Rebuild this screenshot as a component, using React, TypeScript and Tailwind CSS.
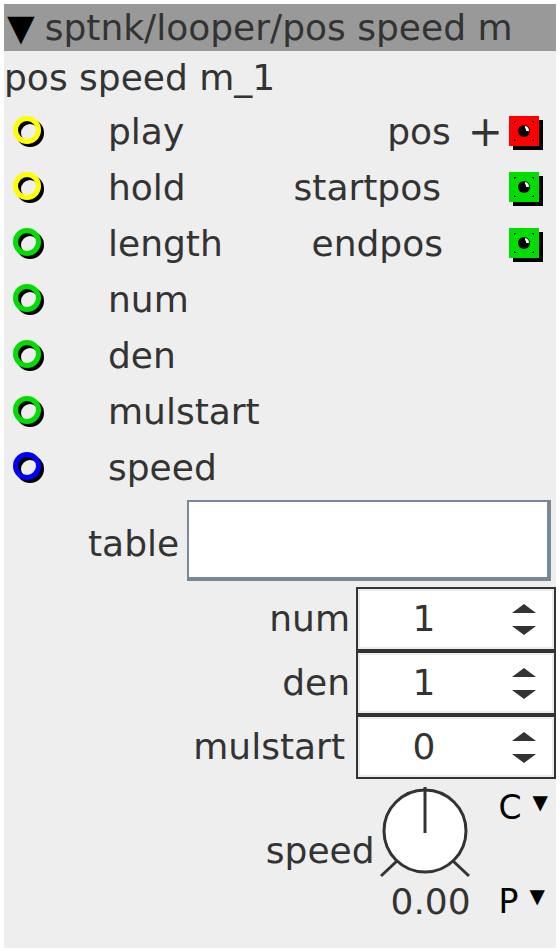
import React from "react";

type Kind = "bool" | "frac" | "pitch";

const INLETS: { name: string; kind: Kind }[] = [
  { name: "play", kind: "bool" },
  { name: "hold", kind: "bool" },
  { name: "length", kind: "frac" },
  { name: "num", kind: "frac" },
  { name: "den", kind: "frac" },
  { name: "mulstart", kind: "frac" },
  { name: "speed", kind: "pitch" },
];

const OUTLETS: { name: string; color: string; plus?: boolean }[] = [
  { name: "pos", color: "#ff0000", plus: true },
  { name: "startpos", color: "#00dd00" },
  { name: "endpos", color: "#00dd00" },
];

const RING: Record<Kind, string> = {
  bool: "#ffff00",
  frac: "#00dd00",
  pitch: "#0000ff",
};

function Inlet({ kind }: { kind: Kind }) {
  return (
    <svg width="36" height="36" viewBox="0 0 36 36" className="shrink-0">
      <circle cx="18" cy="19" r="11.5" fill="none" stroke="#000" strokeWidth="5" />
      <circle cx="15" cy="16" r="11.5" fill="none" stroke={RING[kind]} strokeWidth="5" />
    </svg>
  );
}

function Outlet({ color }: { color: string }) {
  return (
    <svg width="36" height="36" viewBox="0 0 36 36" className="shrink-0">
      <rect x="4" y="6" width="30" height="30" fill="#000" />
      <rect x="0" y="2" width="30" height="30" fill={color} />
      <g fill="#000">
        <rect x="5" y="7" width="2" height="1" />
        <rect x="5" y="7" width="1" height="2" />
        <rect x="23" y="7" width="2" height="1" />
        <rect x="24" y="7" width="1" height="2" />
        <rect x="5" y="26" width="2" height="1" />
        <rect x="5" y="25" width="1" height="2" />
        <rect x="23" y="26" width="2" height="1" />
        <rect x="24" y="25" width="1" height="2" />
      </g>
      <circle cx="15" cy="17" r="6" fill="#000" />
      <path d="M16 12 A5 5 0 0 1 20 17 L17 17 A3 3 0 0 0 16 14 Z" fill="#fff" />
    </svg>
  );
}

function Spinner({ label, value, gap = 6 }: { label: string; value: string; gap?: number }) {
  return (
    <div className="flex h-16 items-center">
      <span className={gap === 6 ? "mr-[6px]" : "mr-[11px]"}>{label}</span>
      <div className="flex h-16 w-[200px] border-2 border-[#333333] bg-white">
        <div className="flex flex-1 items-center border-2 border-[#ececec]">
          <span className="w-[128px] text-center">{value}</span>
          <div className="ml-[24px] flex flex-col gap-[13px]">
            <svg width="24" height="9" viewBox="0 0 24 9">
              <path d="M12 0 L24 9 L0 9 Z" fill="#333" />
            </svg>
            <svg width="24" height="9" viewBox="0 0 24 9">
              <path d="M0 0 L24 0 L12 9 Z" fill="#333" />
            </svg>
          </div>
        </div>
      </div>
    </div>
  );
}

function Knob() {
  return (
    <svg width="100" height="96" viewBox="0 0 100 96" className="shrink-0">
      <circle cx="50" cy="48" r="41" fill="#fff" stroke="#333" strokeWidth="3" />
      <line x1="50" y1="4" x2="50" y2="50" stroke="#333" strokeWidth="3" />
      <line x1="6" y1="93" x2="22" y2="78" stroke="#333" strokeWidth="3" />
      <line x1="94" y1="93" x2="78" y2="78" stroke="#333" strokeWidth="3" />
    </svg>
  );
}

function Mode({ letter }: { letter: string }) {
  return (
    <span className="flex items-start">
      <span>{letter}</span>
      <span className="ml-[11px] mt-[1px] text-[20px]">▼</span>
    </span>
  );
}

export default function App() {
  return (
    <div
      className="min-h-[952px] bg-white p-1 text-[36px] leading-none text-[#333333]"
      style={{ fontFamily: '"DejaVu Sans", sans-serif' }}
    >
      <div className="flex h-[944px] w-[552px] flex-col bg-[#eeeeee]">
        <div className="flex h-[47px] items-center bg-[#999999] pl-[3px]">
          <span className="text-black">▼</span>
          <span className="ml-[10px]">sptnk/looper/pos speed m</span>
        </div>
        <div className="flex h-[53px] items-center">pos speed m_1</div>

        <div className="flex">
          <div className="flex flex-col">
            {INLETS.map((inlet) => (
              <div key={inlet.name} className="flex h-14 items-center pl-[8px]">
                <Inlet kind={inlet.kind} />
                <span className="ml-[60px]">{inlet.name}</span>
              </div>
            ))}
          </div>
          <div className="ml-auto flex flex-col items-end pr-[11px]">
            {OUTLETS.map((outlet) => (
              <div key={outlet.name} className="flex h-14 items-center">
                <span className={outlet.name === "endpos" ? "mr-[-2px]" : ""}>{outlet.name}</span>
                {outlet.plus && <span className="ml-[17px] text-[42px]">+</span>}
                <span className={outlet.plus ? "ml-[6px]" : "ml-[68px]"}>
                  <Outlet color={outlet.color} />
                </span>
              </div>
            ))}
          </div>
        </div>

        <div className="mt-[3px] flex h-[82px] items-center pl-[84px]">
          <span className="mt-[8px]">table</span>
          <div className="ml-[8px] h-[81px] w-[364px] border-t-2 border-r-4 border-b-4 border-l-2 border-[#7a8796] bg-white" />
        </div>

        <div className="mt-[6px] flex flex-col items-end">
          <Spinner label="num" value="1" />
          <Spinner label="den" value="1" />
          <Spinner label="mulstart" value="0" gap={11} />
        </div>

        <div className="mt-[4px] flex justify-end pr-[8px]">
          <span className="mt-[50px]">speed</span>
          <div className="flex flex-col items-center">
            <Knob />
            <span className="mt-[5px] ml-[12px]">0.00</span>
          </div>
          <div className="ml-[24px] flex flex-col justify-between pb-[2px] pt-[8px] text-[33px] text-black">
            <Mode letter="C" />
            <Mode letter="P" />
          </div>
        </div>
      </div>
    </div>
  );
}
